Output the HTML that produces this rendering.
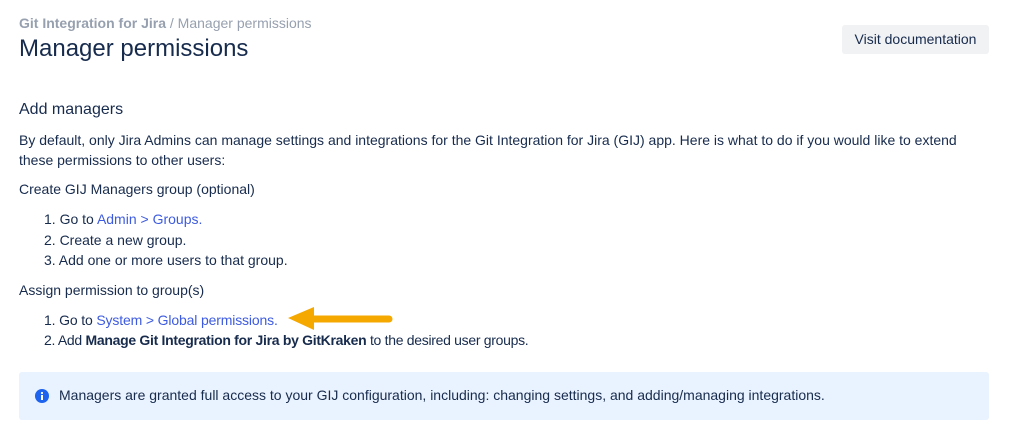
<!DOCTYPE html>
<html><head><meta charset="utf-8"><style>
body{margin:0;background:#fff;font-family:"Liberation Sans",Arial,sans-serif;color:#172b4d;width:1009px;height:438px;position:relative;overflow:hidden}
.a{position:absolute;white-space:nowrap;font-size:14px;line-height:20px}
a{color:#3d5be0;text-decoration:none}
.bc{left:19px;top:13px;color:#97a0af;font-size:14px}
.bc b{font-weight:bold;color:#97a0af}
h1{position:absolute;left:19px;top:33px;margin:0;font-size:24px;font-weight:normal;line-height:32px}
.btn{position:absolute;left:842px;top:25px;width:147px;height:29px;background:#f1f2f4;border-radius:3px;font-size:14px;line-height:29px;text-align:center;color:#172b4d}
h2{position:absolute;left:19px;top:99px;margin:0;font-size:16px;font-weight:normal;line-height:22px}
.box{position:absolute;left:19px;top:372px;width:970px;height:48px;background:#e9f2ff;border-radius:3px}
</style></head><body>
<div class="a bc"><b>Git Integration for Jira</b> / Manager permissions</div>
<h1>Manager permissions</h1>
<div class="btn">Visit documentation</div>
<h2>Add managers</h2>
<div class="a" style="left:19px;top:130px">By default, only Jira Admins can manage settings and integrations for the Git Integration for Jira (GIJ) app. Here is what to do if you would like to extend</div>
<div class="a" style="left:19px;top:150px">these permissions to other users:</div>
<div class="a" style="left:19px;top:179px">Create GIJ Managers group (optional)</div>
<div class="a" style="left:44px;top:209px">1. Go to <a>Admin &gt; Groups.</a></div>
<div class="a" style="left:44px;top:230px">2. Create a new group.</div>
<div class="a" style="left:44px;top:250px">3. Add one or more users to that group.</div>
<div class="a" style="left:19px;top:280px">Assign permission to group(s)</div>
<div class="a" style="left:44px;top:310px;letter-spacing:-0.15px">1. Go to <a>System &gt; Global permissions.</a></div>
<div class="a" style="left:44px;top:330px;letter-spacing:-0.3px">2. Add <b>Manage Git Integration for Jira by GitKraken</b> to the desired user groups.</div>
<svg style="position:absolute;left:285px;top:305px" width="110" height="26"><path d="M104 14H24" stroke="#f5a800" stroke-width="7" stroke-linecap="round"/><path d="M3 13L29 2V25Z" fill="#f5a800"/></svg>
<div class="box"></div>
<svg style="position:absolute;left:35px;top:389px" width="14" height="14"><circle cx="7" cy="7" r="7" fill="#1d63ed"/><rect x="6" y="6" width="2" height="5" fill="#fff"/><circle cx="7" cy="4" r="1.1" fill="#fff"/></svg>
<div class="a" style="left:59px;top:385px">Managers are granted full access to your GIJ configuration, including: changing settings, and adding/managing integrations.</div>
</body></html>
